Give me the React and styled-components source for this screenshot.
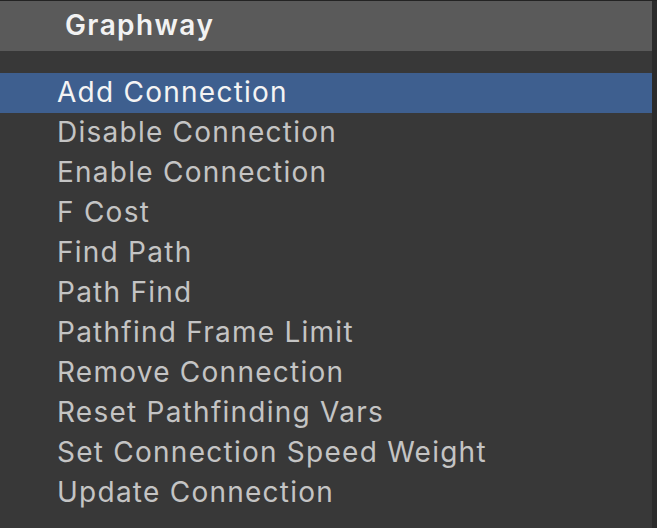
import React from "react";
import styled, { createGlobalStyle } from "styled-components";

const GlobalStyle = createGlobalStyle`
  html, body {
    margin: 0;
    padding: 0;
    background: #2b2b2b;
  }
  body {
    font-family: Inter, "Noto Sans", sans-serif;
  }
`;

const Window = styled.div`
  width: 657px;
  height: 528px;
  display: flex;
  background: #2b2b2b;
  border-top: 1px solid #232323;
  box-sizing: border-box;
  overflow: hidden;
`;

const Panel = styled.div`
  width: 652px;
  display: flex;
  flex-direction: column;
  background: #383838;
`;

const Header = styled.div`
  height: 50px;
  display: flex;
  align-items: center;
  padding-left: 65px;
  padding-bottom: 2px;
  box-sizing: border-box;
  background: #5a5a5a;
  color: #f2f2f2;
  font-size: 28px;
  font-weight: 600;
  letter-spacing: 1.4px;
`;

const List = styled.ul`
  list-style: none;
  margin: 22px 0 0;
  padding: 0;
`;

const Item = styled.li`
  height: 40px;
  display: flex;
  align-items: center;
  padding-left: 57px;
  padding-bottom: 2px;
  box-sizing: border-box;
  font-size: 28px;
  letter-spacing: 1.25px;
  background: ${({ $selected }) => ($selected ? "#3e5f8f" : "transparent")};
  color: ${({ $selected }) => ($selected ? "#f4f4f4" : "#c4c4c4")};
`;

const items = [
  "Add Connection",
  "Disable Connection",
  "Enable Connection",
  "F Cost",
  "Find Path",
  "Path Find",
  "Pathfind Frame Limit",
  "Remove Connection",
  "Reset Pathfinding Vars",
  "Set Connection Speed Weight",
  "Update Connection",
];

export default function App() {
  return (
    <>
      <GlobalStyle />
      <Window>
        <Panel>
          <Header>Graphway</Header>
          <List>
            {items.map((label, i) => (
              <Item key={label} $selected={i === 0}>
                {label}
              </Item>
            ))}
          </List>
        </Panel>
      </Window>
    </>
  );
}
